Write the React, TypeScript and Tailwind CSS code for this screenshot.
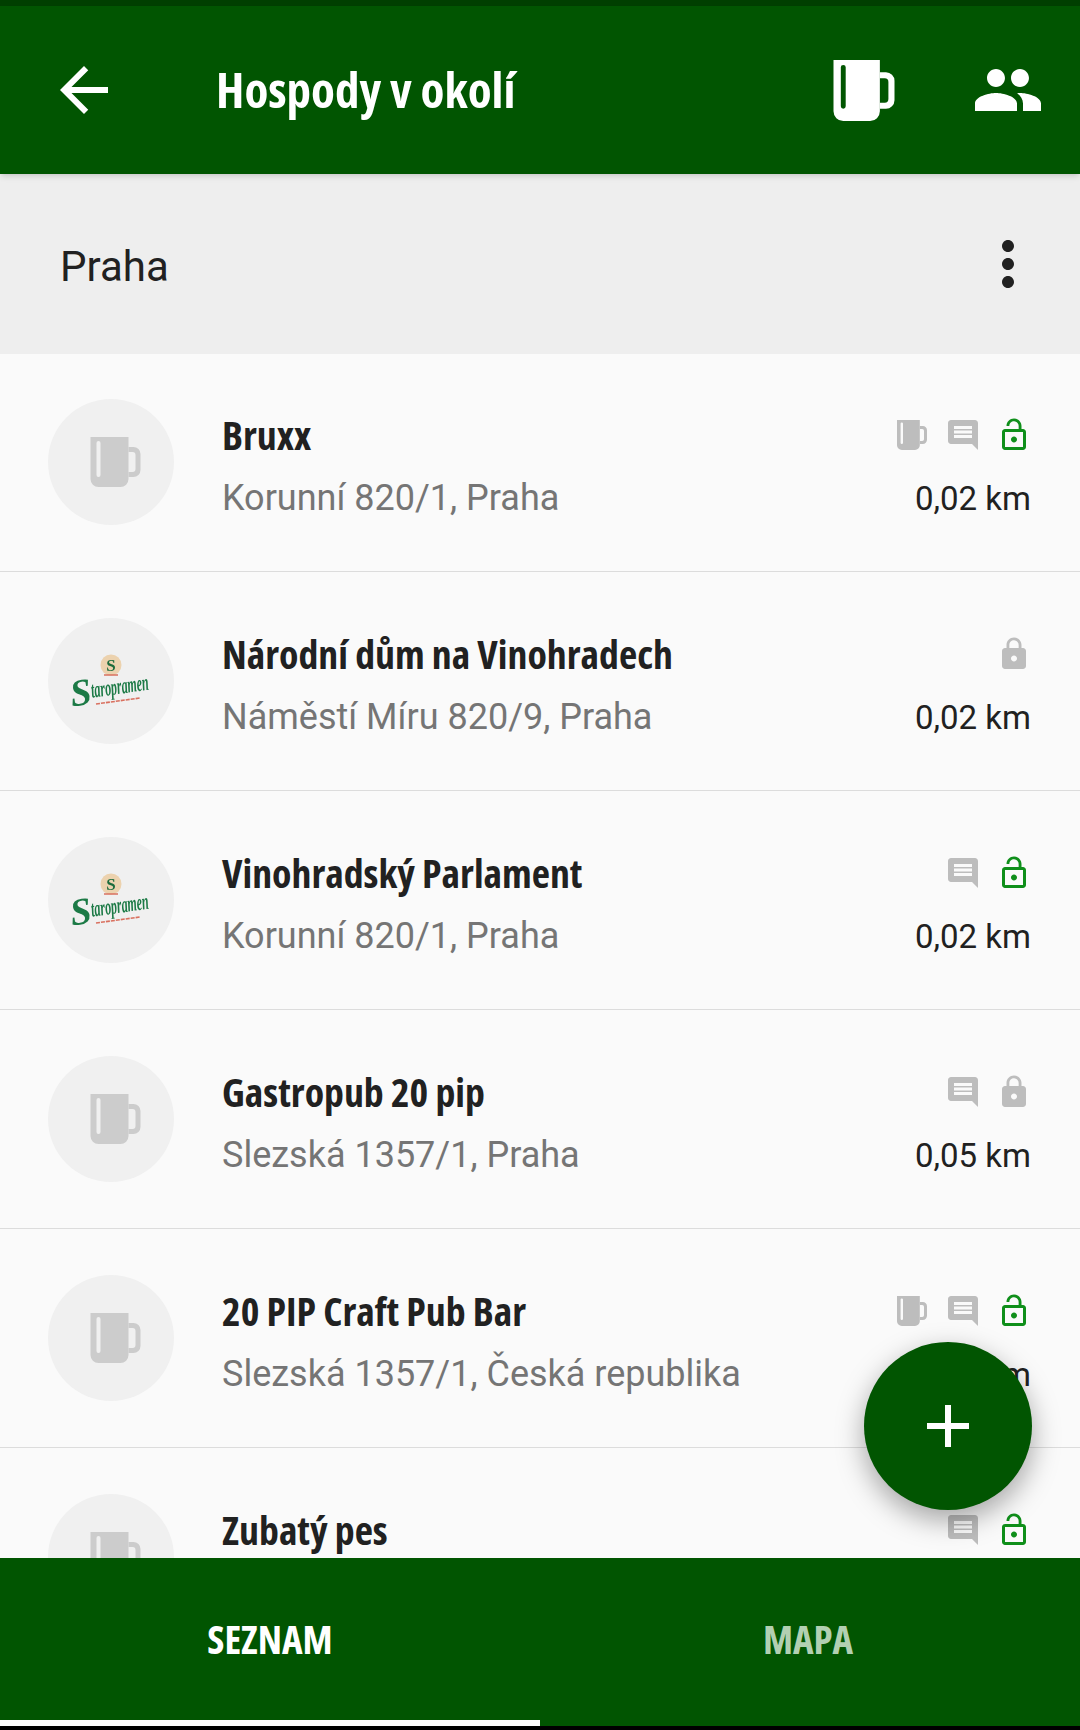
import { Fragment } from "react";

type Pub = {
  name: string;
  address?: string;
  distance?: string;
  logo?: boolean;
  mug?: boolean;
  comment?: boolean;
  lockOpen?: boolean;
};

const pubs: Pub[] = [
  { name: "Bruxx", address: "Korunní 820/1, Praha", distance: "0,02 km", mug: true, comment: true, lockOpen: true },
  { name: "Národní dům na Vinohradech", address: "Náměstí Míru 820/9, Praha", distance: "0,02 km", logo: true },
  { name: "Vinohradský Parlament", address: "Korunní 820/1, Praha", distance: "0,02 km", logo: true, comment: true, lockOpen: true },
  { name: "Gastropub 20 pip", address: "Slezská 1357/1, Praha", distance: "0,05 km", comment: true },
  { name: "20 PIP Craft Pub Bar", address: "Slezská 1357/1, Česká republika", distance: "0,05 km", mug: true, comment: true, lockOpen: true },
  { name: "Zubatý pes", comment: true, lockOpen: true },
];

function Mug({ className }: { className: string }) {
  return (
    <svg viewBox="0 0 50 50" className={className} fill="currentColor">
      <path
        fillRule="evenodd"
        d="M0 0H38V42a8 8 0 0 1-8 8H8a8 8 0 0 1-8-8ZM6 6a2 2 0 0 1 4 0V38a2 2 0 0 1-4 0Z"
      />
      <path d="M38 10h5a7 7 0 0 1 7 7v16a7 7 0 0 1-7 7h-5v-5h4a3 3 0 0 0 3-3V18a3 3 0 0 0-3-3h-4z" />
    </svg>
  );
}

function Logo() {
  return (
    <svg viewBox="0 0 90 60" className="w-[90px] h-[60px] overflow-visible blur-[0.4px]">
      <circle cx="45" cy="14" r="10.5" fill="#ecd2ae" />
      <text x="45" y="20" textAnchor="middle" fontSize="17" fontWeight="700" fill="#1c6b3c" fontFamily="Liberation Serif, serif">
        S
      </text>
      <path d="M38 24h14" stroke="#d9705f" strokeWidth="1.5" />
      <g transform="rotate(-8 45 38)" fill="#1c7a46" fontFamily="Liberation Serif, serif" fontStyle="italic" fontWeight="700">
        <text x="4" y="50" fontSize="38">
          S
        </text>
        <text x="25" y="44" fontSize="23" textLength="58" lengthAdjust="spacingAndGlyphs">
          taropramen
        </text>
      </g>
      <path d="M30 53 74 47" stroke="#d9705f" strokeWidth="1.6" strokeDasharray="4 1" />
    </svg>
  );
}

function PubRow({ pub }: { pub: Pub }) {
  return (
    <div className="h-[218px] mb-px shrink-0 flex border-b border-[#dcdcdc] pl-12 pr-[48px]">
      <div className="w-[126px] h-[126px] mt-[45px] rounded-full bg-[#f0f0f0] flex items-center justify-center shrink-0 text-[#cccccc]">
        {pub.logo ? <Logo /> : <Mug className="w-[51px] h-[50px] ml-[9px]" />}
      </div>
      <div className="ml-12 flex-1 pt-[56px]">
        <div className="font-['Open_Sans',sans-serif] [font-stretch:75%] font-bold text-[39.8px] leading-[50px] text-[#212121]">
          {pub.name}
        </div>
        {pub.address && (
          <div className="font-['Roboto',sans-serif] text-[36px] leading-[50px] mt-[13px] text-[#757575]">
            {pub.address}
          </div>
        )}
      </div>
      <div className="flex flex-col items-end pt-[63px]">
        <div className="flex items-center gap-[15px] h-9 text-[#bdbdbd]">
          {pub.mug && (
            <div className="w-9 flex justify-center">
              <Mug className="w-[30px] h-[30px]" />
            </div>
          )}
          {pub.comment && (
            <svg viewBox="0 0 24 24" className="w-9 h-9" fill="currentColor">
              <path d="M21.99 4c0-1.1-.89-2-1.99-2H4c-1.1 0-2 .9-2 2v12c0 1.1.9 2 2 2h14l4 4-.01-18zM18 14H6v-2h12v2zm0-3H6V9h12v2zm0-3H6V6h12v2z" />
            </svg>
          )}
          {pub.lockOpen ? (
            <svg viewBox="0 0 24 24" className="w-9 h-9 text-[#0f8f1a]" fill="currentColor">
              <path d="M12 17c1.1 0 2-.9 2-2s-.9-2-2-2-2 .9-2 2 .9 2 2 2zm6-9h-1V6c0-2.76-2.24-5-5-5S7 3.24 7 6h1.9c0-1.71 1.39-3.1 3.1-3.1 1.71 0 3.1 1.39 3.1 3.1v2H6c-1.1 0-2 .9-2 2v10c0 1.1.9 2 2 2h12c1.1 0 2-.9 2-2V10c0-1.1-.9-2-2-2zm0 12H6V10h12v10z" />
            </svg>
          ) : (
            <svg viewBox="0 0 24 24" className="w-9 h-9" fill="currentColor">
              <path d="M18 8h-1V6c0-2.76-2.24-5-5-5S7 3.24 7 6v2H6c-1.1 0-2 .9-2 2v10c0 1.1.9 2 2 2h12c1.1 0 2-.9 2-2V10c0-1.1-.9-2-2-2zm-6 9c-1.1 0-2-.9-2-2s.9-2 2-2 2 .9 2 2-.9 2-2 2zm3.1-9H8.9V6c0-1.71 1.39-3.1 3.1-3.1 1.71 0 3.1 1.39 3.1 3.1v2z" />
            </svg>
          )}
        </div>
        {pub.distance && (
          <div className="font-['Roboto',sans-serif] text-[33px] leading-[40px] mt-[26px] mr-[1px] text-[#212121]">
            {pub.distance}
          </div>
        )}
      </div>
    </div>
  );
}

export default function App() {
  return (
    <div className="relative w-[1080px] h-[1730px] flex flex-col overflow-hidden bg-black">
      <div className="h-[6px] bg-[#003f00] shrink-0" />
      <header className="relative z-10 h-[168px] shrink-0 bg-[#015501] shadow-md flex items-center text-white">
        <svg viewBox="0 0 24 24" className="ml-[48px] w-[72px] h-[72px]" fill="currentColor">
          <path d="M20 11H7.83l5.59-5.59L12 4l-8 8 8 8 1.41-1.41L7.83 13H20v-2z" />
        </svg>
        <h1 className="ml-[96px] flex-1 font-['Open_Sans',sans-serif] [font-stretch:75%] font-bold text-[49px] text-white">
          Hospody v okolí
        </h1>
        <Mug className="w-[62px] h-[61px]" />
        <svg viewBox="0 0 24 24" className="ml-[77px] mr-[36px] w-[72px] h-[72px]" fill="currentColor">
          <path d="M16 11c1.66 0 2.99-1.34 2.99-3S17.66 5 16 5c-1.66 0-3 1.34-3 3s1.34 3 3 3zm-8 0c1.66 0 2.99-1.34 2.99-3S9.66 5 8 5C6.34 5 5 6.34 5 8s1.34 3 3 3zm0 2c-2.33 0-7 1.17-7 3.5V19h14v-2.5c0-2.33-4.67-3.5-7-3.5zm8 0c-.29 0-.62.02-.97.05 1.16.84 1.97 1.97 1.97 3.45V19h6v-2.5c0-2.33-4.67-3.5-7-3.5z" />
        </svg>
      </header>
      <div className="h-[180px] shrink-0 bg-[#eeeeee] flex items-center pl-[60px] pr-[36px]">
        <span className="flex-1 pt-[4px] font-['Roboto',sans-serif] text-[42px] text-[#212121]">Praha</span>
        <svg viewBox="0 0 24 24" className="w-[72px] h-[72px] text-[#212121]" fill="currentColor">
          <path d="M12 8c1.1 0 2-.9 2-2s-.9-2-2-2-2 .9-2 2 .9 2 2 2zm0 2c-1.1 0-2 .9-2 2s.9 2 2 2 2-.9 2-2-.9-2-2-2zm0 6c-1.1 0-2 .9-2 2s.9 2 2 2 2-.9 2-2-.9-2-2-2z" />
        </svg>
      </div>
      <main className="flex-1 min-h-0 overflow-hidden bg-[#fafafa] flex flex-col">
        {pubs.map((pub) => (
          <Fragment key={pub.name}>
            <PubRow pub={pub} />
          </Fragment>
        ))}
      </main>
      <nav className="h-[168px] shrink-0 bg-[#015501] flex font-['Open_Sans',sans-serif] [font-stretch:75%] font-bold text-[39px]">
        <div className="relative w-1/2 flex items-center justify-center text-white pb-[6px]">
          SEZNAM
          <div className="absolute left-0 right-0 bottom-0 h-[6px] bg-white" />
        </div>
        <div className="w-1/2 flex items-center justify-center text-[#b2d0b2] pb-[6px] pr-[4px]">MAPA</div>
      </nav>
      <div className="h-1 shrink-0 bg-black" />
      <button className="absolute left-[864px] top-[1342px] w-[168px] h-[168px] rounded-full bg-[#015501] flex items-center justify-center text-white shadow-[0_10px_28px_rgba(0,0,0,0.35)]">
        <svg viewBox="0 0 24 24" className="w-[72px] h-[72px]" fill="currentColor">
          <path d="M19 13h-6v6h-2v-6H5v-2h6V5h2v6h6v2z" />
        </svg>
      </button>
    </div>
  );
}
